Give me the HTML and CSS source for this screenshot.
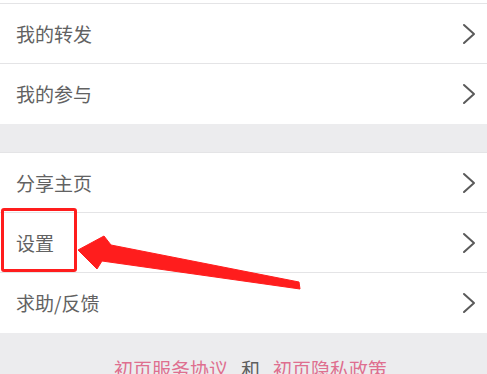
FILE: index.html
```html
<!DOCTYPE html>
<html lang="zh-CN">
<head>
  <meta charset="UTF-8">
  <meta name="viewport" content="width=device-width, initial-scale=1.0">
  <title>我的</title>
  <link rel="stylesheet" href="styles.css">
</head>
<body>
  <div class="pagina">
    <div class="tope"></div>

    <section class="grupo">
      <div class="fila">
        <span class="etiqueta">我的转发</span>
        <svg class="flecha" viewBox="0 0 14 22"><path d="M2 2 L12 11 L2 20" /></svg>
      </div>
      <div class="fila ultima">
        <span class="etiqueta">我的参与</span>
        <svg class="flecha" viewBox="0 0 14 22"><path d="M2 2 L12 11 L2 20" /></svg>
      </div>
    </section>

    <div class="separador"></div>

    <section class="grupo">
      <div class="fila">
        <span class="etiqueta">分享主页</span>
        <svg class="flecha" viewBox="0 0 14 22"><path d="M2 2 L12 11 L2 20" /></svg>
      </div>
      <div class="fila">
        <span class="etiqueta">设置</span>
        <svg class="flecha" viewBox="0 0 14 22"><path d="M2 2 L12 11 L2 20" /></svg>
      </div>
      <div class="fila ultima">
        <span class="etiqueta">求助/反馈</span>
        <svg class="flecha" viewBox="0 0 14 22"><path d="M2 2 L12 11 L2 20" /></svg>
      </div>
    </section>

    <footer class="pie">
      <span class="enlace">初页服务协议</span><span class="y">和</span><span class="enlace">初页隐私政策</span>
    </footer>

    <!-- marca roja encima del contenido -->
    <div class="marco"></div>
    <svg class="flecha-roja" viewBox="0 0 487 374">
      <polygon points="78,250 104,236 111,245 299,282 300,289 102,261 97,269" />
    </svg>
  </div>
</body>
</html>
```

FILE: styles.css
```css
body {
  margin: 0;
  padding: 0;
  font-family: "Noto Sans CJK SC", "Noto Sans", sans-serif;
  background-color: #ececee;
}

.pagina {
  position: relative;
  width: 487px;
  height: 374px;
  overflow: hidden;
  background-color: #ececee;
}

.tope {
  height: 3px;
  background-color: #fff;
  border-bottom: 1px solid #e4e4e6;
}

.grupo {
  background-color: #fff;
}

.separador {
  height: 28px;
  border-bottom: 1px solid #e4e4e6;
}

.fila {
  display: flex;
  align-items: center;
  justify-content: space-between;
  height: 59px;
  padding: 0 11px 0 16px;
  border-bottom: 1px solid #e4e4e6;
}

.fila.ultima {
  height: 60px;
  border-bottom: none;
}

.etiqueta {
  font-size: 19px;
  line-height: 24px;
  color: #626262;
}

.flecha {
  width: 14px;
  height: 22px;
}

.flecha path {
  fill: none;
  stroke: #5a5a5a;
  stroke-width: 2;
  stroke-linecap: round;
  stroke-linejoin: round;
}

.pie {
  padding-top: 26px;
  padding-left: 14px;
  text-align: center;
  font-size: 19px;
  line-height: 20px;
  white-space: nowrap;
}

.enlace {
  color: #df6f8f;
}

.y {
  color: #5e5e5e;
  margin: 0 13px;
}

.marco {
  position: absolute;
  left: 1px;
  top: 208px;
  width: 70px;
  height: 58px;
  border: 3px solid #ff1d1d;
  border-radius: 3px;
}

.flecha-roja {
  position: absolute;
  left: 0;
  top: 0;
  width: 487px;
  height: 374px;
}

.flecha-roja polygon {
  fill: #ff1d1d;
  stroke: #ff1d1d;
  stroke-width: 1;
  stroke-linejoin: round;
}
```
